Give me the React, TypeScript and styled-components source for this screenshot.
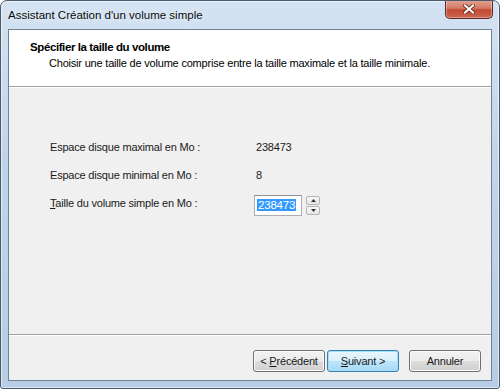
import React from 'react';
import styled, { createGlobalStyle } from 'styled-components';

const GlobalStyle = createGlobalStyle`
  html, body {
    margin: 0;
    padding: 0;
    background: #ffffff;
  }
  body {
    font-family: "Liberation Sans", Arial, sans-serif;
    font-size: 11px;
    letter-spacing: -0.2px;
    color: #000000;
  }
`

const Frame = styled.div`
  width: 500px;
  height: 389px;
  box-sizing: border-box;
  display: flex;
  flex-direction: column;
  padding: 0 7px 7px 7px;
  border: 1px solid #4a5a6c;
  border-radius: 7px 7px 3px 3px;
  background: linear-gradient(180deg, #d4e3f3 0%, #c1d5ea 40%, #b7cde5 100%);
  box-shadow: inset 0 0 0 1px rgba(255, 255, 255, 0.55);
  overflow: hidden;
`

const TitleBar = styled.div`
  height: 28px;
  display: flex;
  justify-content: space-between;
  align-items: flex-start;
  flex-shrink: 0;
`

const Title = styled.span`
  padding-top: 8px;
  font-size: 11.5px;
  letter-spacing: 0;
  color: #0b0b0b;
  text-shadow: 0 0 6px rgba(255, 255, 255, 0.9);
`

const CloseButton = styled.div`
  width: 46px;
  height: 18px;
  margin-right: -1px;
  margin-top: -1px;
  display: flex;
  align-items: center;
  justify-content: center;
  border: 1px solid #5a2a24;
  border-top: none;
  border-radius: 0 0 5px 5px;
  background: linear-gradient(180deg, #e3a595 0%, #d47a66 45%, #c24a33 55%, #cc6450 100%);
  box-shadow: inset 0 0 0 1px rgba(255, 255, 255, 0.35);
`

const Client = styled.div`
  flex: 1;
  display: flex;
  flex-direction: column;
  border: 1px solid #6f8296;
  background: #f0f0f0;
`

const Header = styled.div`
  height: 57px;
  flex-shrink: 0;
  box-sizing: border-box;
  background: #ffffff;
  padding: 10px 0 0 21px;
  border-bottom: 1px solid #a0a0a0;
`

const Heading = styled.div`
  font-weight: bold;
  font-size: 11.5px;
  letter-spacing: -0.4px;
  line-height: 15px;
`

const SubHeading = styled.div`
  padding-left: 19px;
  margin-top: 1px;
  line-height: 15px;
`

const Body = styled.div`
  flex: 1;
  border-top: 1px solid #ffffff;
  border-bottom: 1px solid #a0a0a0;
  padding: 45px 0 0 41px;
`

const Grid = styled.div`
  display: grid;
  grid-template-columns: 206px auto;
  grid-auto-rows: 28px;
  align-items: center;
`

const Label = styled.span`
  color: #1a1a1a;
`

const Value = styled.span`
  color: #1a1a1a;
`

const SpinRow = styled.div`
  display: flex;
  align-items: center;
  gap: 4px;
  margin-left: -2px;
  margin-top: 4px;
`

const Input = styled.div`
  width: 48px;
  height: 21px;
  box-sizing: border-box;
  border: 1px solid #abadb3;
  border-top-color: #8e9197;
  background: #ffffff;
  padding: 2px 0 0 2px;
`

const Selected = styled.span`
  background: #3399ff;
  color: #ffffff;
  font-size: 11.5px;
  line-height: 15px;
  padding: 0 1px;
`

const Spinner = styled.div`
  display: flex;
  flex-direction: column;
  gap: 1px;
  width: 14px;
`

const SpinButton = styled.div`
  height: 9px;
  box-sizing: border-box;
  border: 1px solid #b5b5b5;
  border-radius: 2px;
  background: linear-gradient(180deg, #f8f8f8 0%, #e6e6e6 100%);
  display: flex;
  align-items: center;
  justify-content: center;
`

const Footer = styled.div`
  height: 45px;
  flex-shrink: 0;
  border-top: 1px solid #ffffff;
  box-sizing: border-box;
  display: flex;
  justify-content: flex-end;
  align-items: flex-start;
  padding: 14px 10px 0 0;
`

const Button = styled.div<{ $primary?: boolean; $gap?: number }>`
  width: 72px;
  height: 22px;
  box-sizing: border-box;
  margin-left: ${p => p.$gap ?? 0}px;
  display: flex;
  align-items: center;
  justify-content: center;
  color: #1a1a1a;
  border: 1px solid ${p => (p.$primary ? '#3c7fb1' : '#707070')};
  border-radius: 3px;
  background: ${p =>
    p.$primary
      ? 'linear-gradient(180deg, #eaf6fd 0%, #d9f0fc 50%, #bee6fd 51%, #a7d9f5 100%)'
      : 'linear-gradient(180deg, #f2f2f2 0%, #ebebeb 50%, #dddddd 51%, #cfcfcf 100%)'};
  box-shadow: inset 0 0 0 1px ${p => (p.$primary ? '#9fe0f8' : '#fcfcfc')};
`

const U = styled.span`
  text-decoration: underline;
`

const UpArrow = () => (
  <svg width="5" height="3" viewBox="0 0 5 3">
    <path d="M0 3 L2.5 0 L5 3 Z" fill="#333" />
  </svg>
)

const DownArrow = () => (
  <svg width="5" height="3" viewBox="0 0 5 3">
    <path d="M0 0 L5 0 L2.5 3 Z" fill="#333" />
  </svg>
)

const CloseIcon = () => (
  <svg width="12" height="10" viewBox="0 0 12 10">
    <path d="M2 1.5 L10 8.5 M10 1.5 L2 8.5" stroke="#5a1a10" strokeWidth="3.6" strokeLinecap="square" />
    <path d="M2 1.5 L10 8.5 M10 1.5 L2 8.5" stroke="#ffffff" strokeWidth="2.2" strokeLinecap="square" />
  </svg>
)

const App: React.FC = () => {
  return (
    <>
      <GlobalStyle />
      <Frame>
        <TitleBar>
          <Title>Assistant Création d'un volume simple</Title>
          <CloseButton>
            <CloseIcon />
          </CloseButton>
        </TitleBar>
        <Client>
          <Header>
            <Heading>Spécifier la taille du volume</Heading>
            <SubHeading>
              Choisir une taille de volume comprise entre la taille maximale et la taille minimale.
            </SubHeading>
          </Header>
          <Body>
            <Grid>
              <Label>Espace disque maximal en Mo :</Label>
              <Value>238473</Value>
              <Label>Espace disque minimal en Mo :</Label>
              <Value>8</Value>
              <Label>
                <U>T</U>aille du volume simple en Mo :
              </Label>
              <SpinRow>
                <Input>
                  <Selected>238473</Selected>
                </Input>
                <Spinner>
                  <SpinButton>
                    <UpArrow />
                  </SpinButton>
                  <SpinButton>
                    <DownArrow />
                  </SpinButton>
                </Spinner>
              </SpinRow>
            </Grid>
          </Body>
          <Footer>
            <Button>
              &lt;&nbsp;<U>P</U>récédent
            </Button>
            <Button $primary $gap={2}>
              <U>S</U>uivant &gt;
            </Button>
            <Button $gap={10}>Annuler</Button>
          </Footer>
        </Client>
      </Frame>
    </>
  )
}

export default App;
